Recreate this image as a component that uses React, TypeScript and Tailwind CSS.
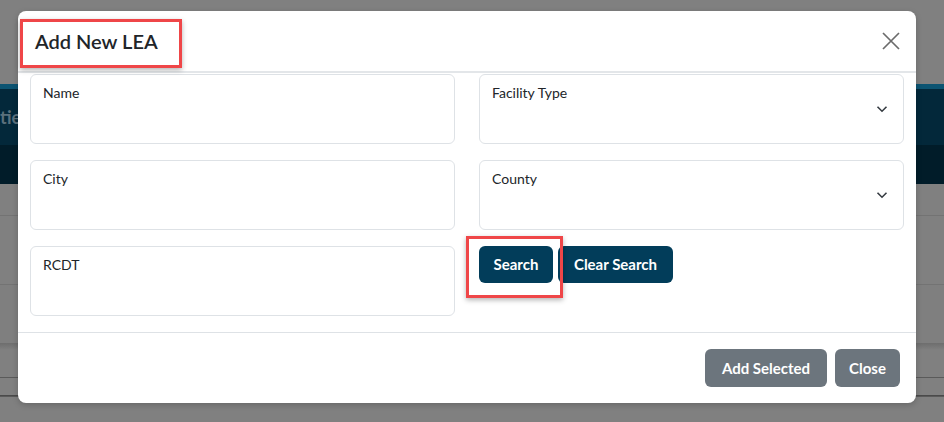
import React from 'react';

const Field: React.FC<{ label: string; select?: boolean }> = ({ label, select }) => (
  <div className="relative h-[70px] rounded-md border border-[#dee2e6] bg-white px-[12px] pt-[5px]">
    <span className="text-[14px] text-[#212529]">{label}</span>
    {select && (
      <svg className="absolute right-[15px] top-[30px]" width="12" height="8" viewBox="0 0 12 8" fill="none">
        <path d="M1.5 1.8 6 6.2l4.5-4.4" stroke="#343a40" strokeWidth="1.6" />
      </svg>
    )}
  </div>
);

const App: React.FC = () => {
  return (
    <div className="relative h-[422px] w-[944px] overflow-hidden bg-[#808080] font-['Lato','Open_Sans',sans-serif]">
      {/* page behind the dimmed backdrop */}
      <div className="flex flex-col">
        <div className="h-[84px]" />
        <div className="h-[5px] bg-[#0c5472]" />
        <div className="flex h-[56px] items-center bg-[#03283a] text-[18px] font-bold text-[#5b707c]">
          <span>ties</span>
        </div>
        <div className="h-[39px] bg-[#011c29]" />
        <div className="h-[32px] border-b border-[#737373]" />
        <div className="h-[69px] border-b border-[#737373]" />
        <div className="h-[58px] bg-[#7f7f7f]" />
        <div className="h-[7px] bg-gradient-to-b from-[#6e6e6e] to-[#808080]" />
        <div className="h-[28px] border-b border-[#5a5a5a]" />
        <div className="grid h-[19px] grid-cols-4 gap-[2px] border-b border-[#5a5a5a]">
          <div className="border-b border-r border-[#4a4a4a]" />
          <div className="border-b border-x border-[#4a4a4a]" />
          <div className="border-b border-x border-[#4a4a4a]" />
          <div className="border-b border-l border-[#4a4a4a]" />
        </div>
      </div>

      {/* modal */}
      <div className="absolute left-[18px] top-[11px] flex h-[392px] w-[898px] flex-col rounded-lg bg-white shadow-[0_2px_6px_rgba(0,0,0,0.2)]">
        <div className="flex h-[62px] items-center justify-between border-b-2 border-[#e3e6e9] pl-[17px] pr-[16px]">
          <h5 className="text-[20px] font-semibold text-[#212529]">Add New LEA</h5>
          <svg width="18" height="18" viewBox="0 0 18 18" fill="none">
            <path d="M1 1l16 16M17 1 1 17" stroke="#6b6b6b" strokeWidth="1.7" />
          </svg>
        </div>

        <div className="grid flex-1 grid-cols-2 content-start gap-x-[24px] gap-y-[16px] border-b border-[#dee2e6] px-[12px] pt-[1px]">
          <Field label="Name" />
          <Field label="Facility Type" select />
          <Field label="City" />
          <Field label="County" select />
          <Field label="RCDT" />
          <div className="flex items-start gap-[5px]">
            <button className="h-[37px] w-[74px] rounded-md bg-[#023d5a] text-[15px] font-bold text-white">Search</button>
            <button className="h-[37px] w-[115px] rounded-md bg-[#023d5a] text-[15px] font-bold text-white">Clear Search</button>
          </div>
        </div>

        <div className="flex h-[70px] items-center justify-end gap-[8px] pr-[16px]">
          <button className="h-[38px] w-[122px] rounded-md bg-[#6c757d] text-[15px] font-bold text-white">Add Selected</button>
          <button className="h-[38px] w-[65px] rounded-md bg-[#6c757d] text-[15px] font-bold text-white">Close</button>
        </div>
      </div>

      {/* annotation highlights */}
      <div className="absolute left-[20px] top-[19px] h-[49px] w-[162px] border-[3px] border-[#ef4648] shadow-[0_2px_5px_rgba(0,0,0,0.3)]" />
      <div className="absolute left-[466px] top-[236px] h-[62px] w-[97px] border-[3px] border-[#ef4648] shadow-[0_2px_5px_rgba(0,0,0,0.3)]" />
    </div>
  );
};

export default App;
